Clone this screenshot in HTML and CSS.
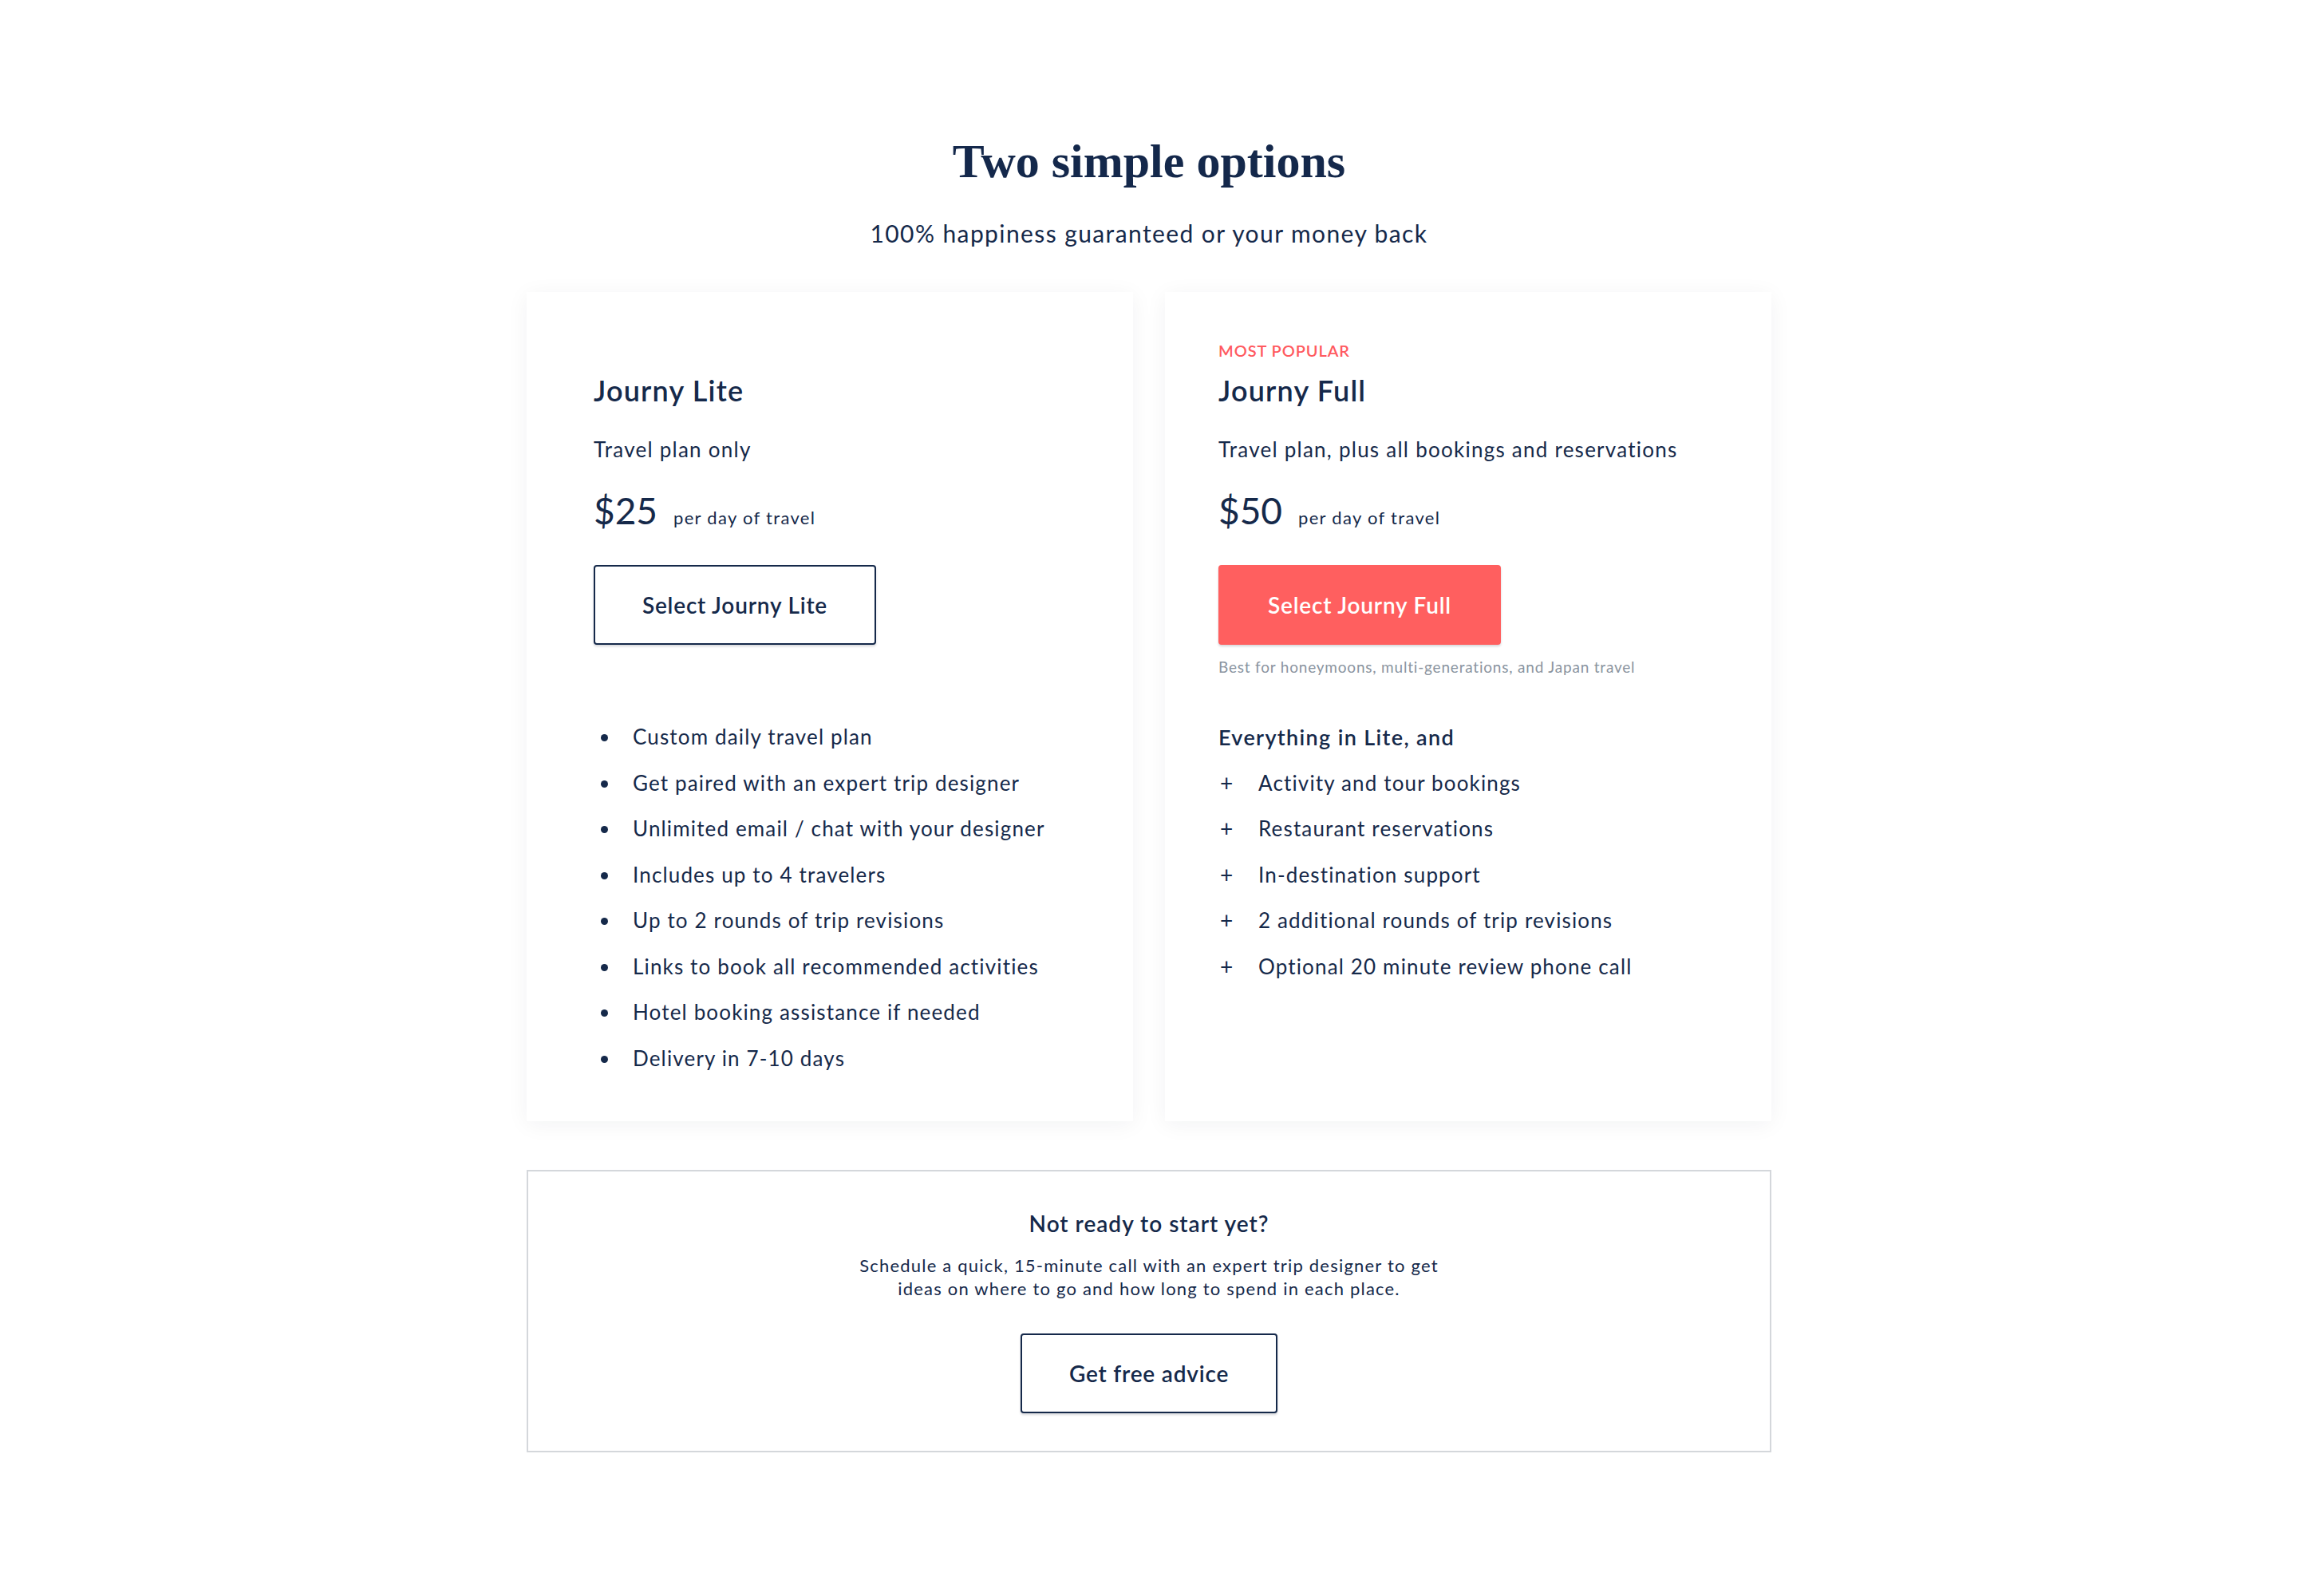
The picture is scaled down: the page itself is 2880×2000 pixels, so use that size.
FILE: index.html
```html
<!DOCTYPE html>
<html lang="en">
<head>
<meta charset="utf-8">
<title>Journy – Two simple options</title>
<link rel="stylesheet" href="styles.css">
</head>
<body>
<main class="pricing">
  <h1 class="title">Two simple options</h1>
  <p class="subtitle">100% happiness guaranteed or your money back</p>

  <div class="plans">
    <section class="plan plan-lite">
      <div class="tag" aria-hidden="true"></div>
      <h2 class="plan-name">Journy Lite</h2>
      <p class="plan-desc">Travel plan only</p>
      <div class="price"><span class="amount">$25</span><span class="unit">per day of travel</span></div>
      <a class="btn btn-outline btn-plan" href="#">Select Journy Lite</a>
      <p class="note"></p>
      <div class="features">
        <ul class="feature-list">
          <li class="feature"><span class="mark"><span class="dot"></span></span>Custom daily travel plan</li>
          <li class="feature"><span class="mark"><span class="dot"></span></span>Get paired with an expert trip designer</li>
          <li class="feature"><span class="mark"><span class="dot"></span></span>Unlimited email / chat with your designer</li>
          <li class="feature"><span class="mark"><span class="dot"></span></span>Includes up to 4 travelers</li>
          <li class="feature"><span class="mark"><span class="dot"></span></span>Up to 2 rounds of trip revisions</li>
          <li class="feature"><span class="mark"><span class="dot"></span></span>Links to book all recommended activities</li>
          <li class="feature"><span class="mark"><span class="dot"></span></span>Hotel booking assistance if needed</li>
          <li class="feature"><span class="mark"><span class="dot"></span></span>Delivery in 7-10 days</li>
        </ul>
      </div>
    </section>

    <section class="plan plan-full">
      <div class="tag">MOST POPULAR</div>
      <h2 class="plan-name">Journy Full</h2>
      <p class="plan-desc">Travel plan, plus all bookings and reservations</p>
      <div class="price"><span class="amount">$50</span><span class="unit">per day of travel</span></div>
      <a class="btn btn-primary btn-plan" href="#">Select Journy Full</a>
      <p class="note">Best for honeymoons, multi-generations, and Japan travel</p>
      <div class="features">
        <h3 class="features-head">Everything in Lite, and</h3>
        <ul class="feature-list">
          <li class="feature"><span class="mark plus">+</span>Activity and tour bookings</li>
          <li class="feature"><span class="mark plus">+</span>Restaurant reservations</li>
          <li class="feature"><span class="mark plus">+</span>In-destination support</li>
          <li class="feature"><span class="mark plus">+</span>2 additional rounds of trip revisions</li>
          <li class="feature"><span class="mark plus">+</span>Optional 20 minute review phone call</li>
        </ul>
      </div>
    </section>
  </div>

  <section class="advice">
    <h2 class="advice-title">Not ready to start yet?</h2>
    <p class="advice-text">Schedule a quick, 15-minute call with an expert trip designer to get<br>ideas on where to go and how long to spend in each place.</p>
    <a class="btn btn-outline btn-advice" href="#">Get free advice</a>
  </section>
</main>
</body>
</html>
```

FILE: styles.css
```css
* {
  box-sizing: border-box;
}

html,
body {
  margin: 0;
  background: #ffffff;
}

body {
  font-family: Lato, "Noto Sans", sans-serif;
  color: #15294a;
}

.pricing {
  width: 1560px;
  margin: 0 auto;
  padding-top: 166px;
  display: flex;
  flex-direction: column;
  align-items: center;
}

.title {
  margin: 0;
  font-family: "Liberation Serif", "Times New Roman", serif;
  font-weight: 700;
  font-size: 60px;
  line-height: 72px;
  color: #14284b;
}

.subtitle {
  margin: 34px 0 0;
  font-size: 30px;
  line-height: 40px;
  letter-spacing: 1.4px;
}

.plans {
  align-self: stretch;
  display: grid;
  grid-template-columns: 1fr 1fr;
  gap: 40px;
  margin-top: 54px;
}

.plan {
  background: #ffffff;
  box-shadow: 0 4px 26px rgba(20, 30, 50, 0.055);
  padding: 60px 84px 50px;
}

.plan-full {
  padding-left: 67px;
  padding-right: 67px;
}

.tag {
  height: 26px;
  font-size: 20px;
  line-height: 26px;
  font-weight: 600;
  letter-spacing: 0.9px;
  color: #ff5a5f;
}

.plan-name {
  margin: 15px 0 0;
  font-size: 36px;
  line-height: 44px;
  font-weight: 600;
  letter-spacing: 1.2px;
}

.plan-desc {
  margin: 34px 0 0;
  font-size: 26px;
  line-height: 36px;
  letter-spacing: 1.25px;
}

.price {
  display: flex;
  align-items: baseline;
  gap: 20px;
  margin-top: 31px;
}

.amount {
  font-size: 46px;
  line-height: 56px;
  font-weight: 400;
}

.unit {
  font-size: 22px;
  line-height: 28px;
  letter-spacing: 1.3px;
}

.btn {
  display: flex;
  align-items: center;
  justify-content: center;
  height: 100px;
  border: 2px solid #15294a;
  border-radius: 4px;
  font-size: 28px;
  font-weight: 600;
  letter-spacing: 0.8px;
  text-decoration: none;
  color: #15294a;
  background: #ffffff;
  box-shadow: 0 2px 3px rgba(20, 30, 50, 0.18);
}

.btn-plan {
  width: 354px;
  margin-top: 40px;
}

.btn-primary {
  background: #ff5f5f;
  border-color: #ff5f5f;
  color: #ffffff;
}

.note {
  margin: 16px 0 0;
  height: 24px;
  font-size: 19px;
  line-height: 24px;
  letter-spacing: 0.8px;
  color: #8a94a0;
}

.features {
  margin-top: 47px;
}

.features-head {
  margin: 0;
  font-size: 27px;
  line-height: 57.5px;
  font-weight: 600;
  letter-spacing: 1.35px;
}

.feature-list {
  list-style: none;
  margin: 0;
  padding: 0;
}

.feature {
  display: flex;
  align-items: center;
  height: 57.5px;
  font-size: 26px;
  line-height: 57.5px;
  letter-spacing: 1.15px;
}

.mark {
  flex: none;
  width: 49px;
  display: flex;
  align-items: center;
  height: 57.5px;
  letter-spacing: 0;
}

.dot {
  width: 9px;
  height: 9px;
  margin: 2px 0 0 9px;
  border-radius: 50%;
  background: #15294a;
}

.mark.plus {
  width: 50px;
  padding-left: 2px;
  font-size: 28px;
}

.advice {
  align-self: stretch;
  margin-top: 61px;
  border: 2px solid #d4d7db;
  padding: 47px 0;
  display: flex;
  flex-direction: column;
  align-items: center;
  text-align: center;
}

.advice-title {
  margin: 0;
  font-size: 28px;
  line-height: 36px;
  font-weight: 600;
  letter-spacing: 1px;
}

.advice-text {
  margin: 20px 0 0;
  font-size: 22px;
  line-height: 29px;
  letter-spacing: 1.2px;
}

.btn-advice {
  width: 322px;
  margin-top: 42px;
}
```
